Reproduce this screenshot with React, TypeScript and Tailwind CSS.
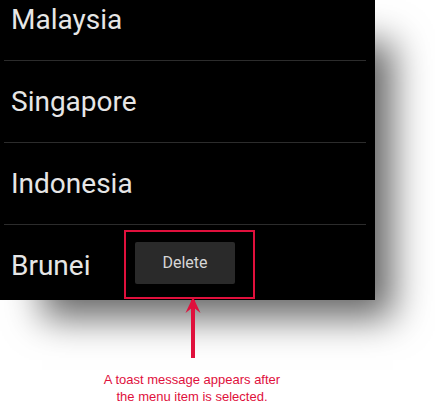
import React from 'react';

const countries = ['Malaysia', 'Singapore', 'Indonesia', 'Brunei'];

export default function App() {
  return (
    <div className="relative w-[435px] h-[417px] bg-white overflow-hidden">
      {/* phone screen */}
      <div className="relative w-[375px] h-[300px] bg-black overflow-hidden shadow-[30px_30px_35px_-12px_rgba(0,0,0,0.6)]">
        <ul className="mt-[-21px] ml-[4px] w-[362px]">
          {countries.map((name, i) => (
            <li key={name}>
              <div
                className="h-[81px] flex items-center pl-[7px] text-[28px] leading-none text-[#e6e6e6]"
                style={{ fontFamily: 'Roboto, "Noto Sans", sans-serif' }}
              >
                {name}
              </div>
              {i < countries.length - 1 && <div className="h-px bg-[#2c2c2c]" />}
            </li>
          ))}
        </ul>

        {/* toast */}
        <div className="absolute left-[135px] top-[242px] w-[100px] h-[42px] rounded-[2px] bg-[#2a2a2a] flex items-center justify-center">
          <span
            className="text-[16px] text-[#d6d6d6] leading-none"
            style={{ fontFamily: 'Roboto, "Noto Sans", sans-serif' }}
          >
            Delete
          </span>
        </div>

        {/* annotation box */}
        <div className="absolute left-[124px] top-[230px] w-[131px] h-[69px] border-2 border-[#e0103c]" />
      </div>

      {/* arrow */}
      <svg className="absolute left-[183px] top-[296px]" width="20" height="64" viewBox="0 0 20 64">
        <path d="M10 4 L10 62" stroke="#e0103c" strokeWidth="4" fill="none" />
        <path d="M10 1 L17.5 17 L10 11 L2.5 17 Z" fill="#e0103c" />
      </svg>

      {/* caption */}
      <p
        className="mt-[71px] w-[384px] text-center text-[13px] leading-[17px] text-[#e0103c]"
        style={{ fontFamily: '"Comic Sans MS", "Liberation Sans", sans-serif' }}
      >
        A toast message appears after
        <br />
        the menu item is selected.
      </p>
    </div>
  );
}
